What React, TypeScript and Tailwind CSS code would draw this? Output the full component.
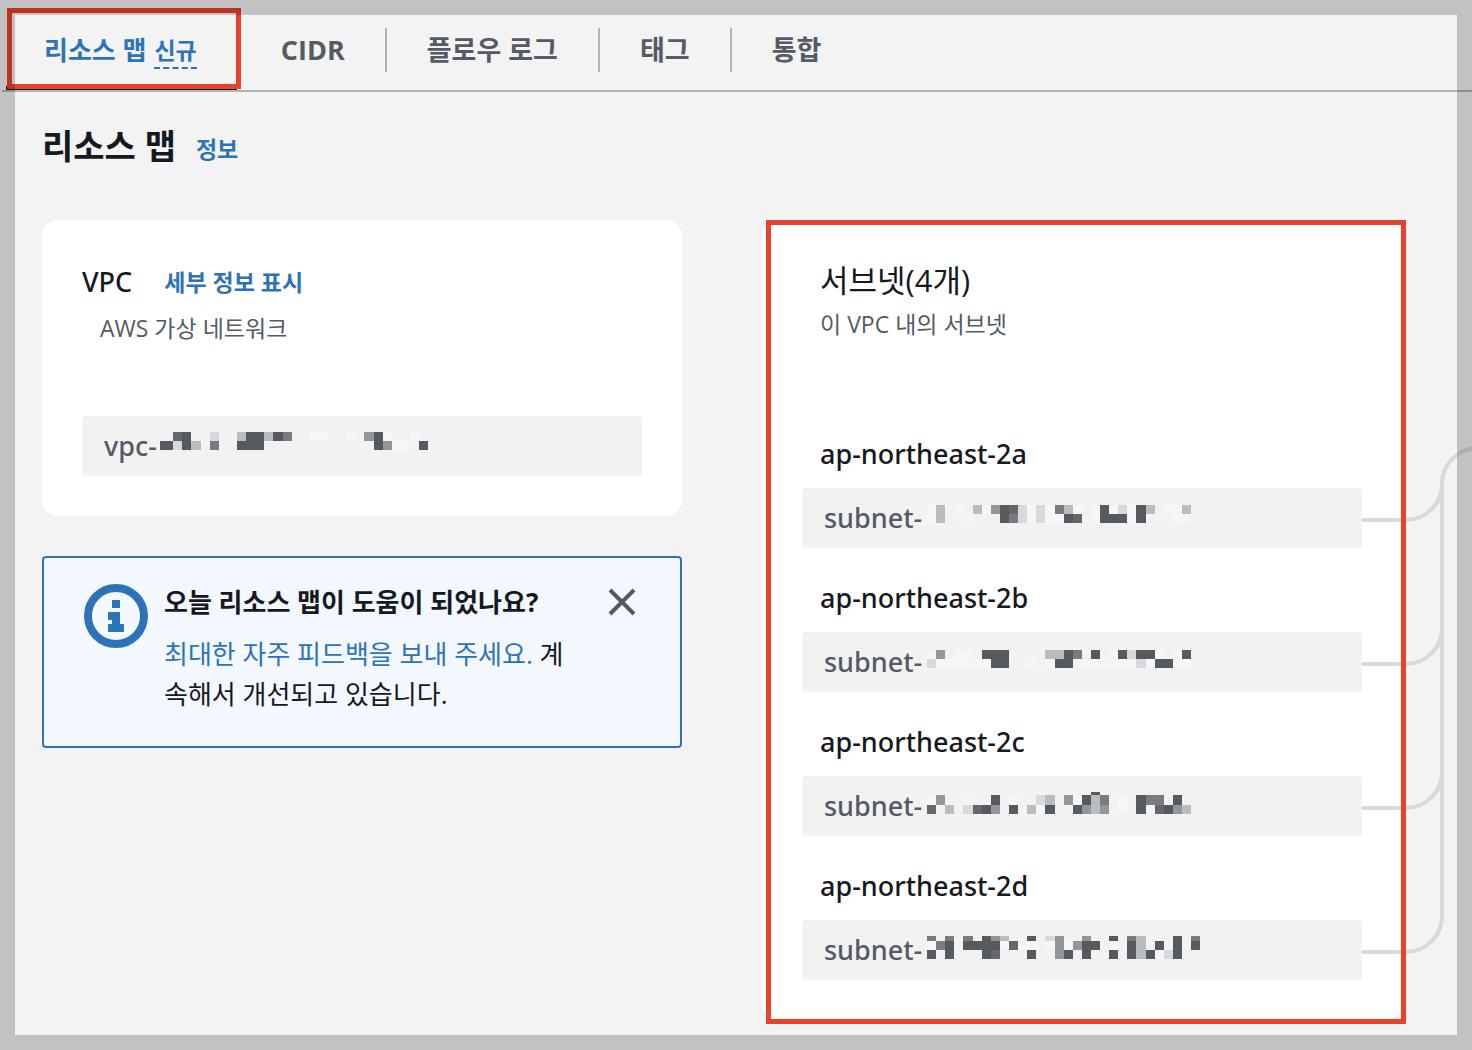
import React from "react";

type MosaicRow = [height: number, cells: string];

const SHADES: Record<string, string> = {
  w: "#f4f6f8",
  "1": "#d6dade",
  "2": "#b9bcc0",
  "3": "#92959a",
  "4": "#787c81",
  "5": "#64686d",
  "6": "#555a61",
};

/* Left edge of a mosaic column; columns are slightly wider than 9px. */
const columnX = (i: number) => Math.round((i * 255) / 28);

/* Pixelated mask drawn over the private part of a resource ID. */
function Mosaic({ rows, offset = 0, className }: { rows: MosaicRow[]; offset?: number; className: string }) {
  const total = rows.reduce((sum, [h]) => sum + h, 0);
  let top = 0;
  return (
    <svg width={275} height={total} aria-hidden="true" shapeRendering="crispEdges" className={className}>
      {rows.map(([h, cells], r) => {
        const y = top;
        top += h;
        return [...cells].map((c, i) =>
          SHADES[c] ? (
            <rect
              key={`${r}-${i}`}
              x={columnX(i) - offset}
              y={y}
              width={columnX(i + 1) - columnX(i)}
              height={h}
              fill={SHADES[c]}
            />
          ) : null
        );
      })}
    </svg>
  );
}

const VPC_ROWS: MosaicRow[] = [
  [9, "..56..1..266264..ww..w.36w..w."],
  [9, "66162.4..666............63ww.6"],
];

const SUBNETS: { zone: string; top: string; rows: MosaicRow[] }[] = [
  {
    zone: "ap-northeast-2a",
    top: "absolute left-[125px] top-[17px]",
    rows: [
      [9, "w2.w.2w3651w1w42w.w6w1w62.ww2"],
      [9, "w2..w...641w1ww65.w666w6...ww"],
    ],
  },
  {
    zone: "ap-northeast-2b",
    top: "absolute left-[125px] top-[18px]",
    rows: [
      [9, "w3.ww.666....2264.6.w6166w.w6"],
      [9, "1wwwwww66..w.w66.wwwwww1w66ww"],
    ],
  },
  {
    zone: "ap-northeast-2c",
    top: "absolute left-[125px] top-[16px]",
    rows: [
      [3, "..................6"],
      [10, "w3..w..6.w..12.3w624.w.644.6."],
      [9, "5.2.1563.6.2w6..6323.w.6w5632"],
    ],
  },
  {
    zone: "ap-northeast-2d",
    top: "absolute left-[125px] top-[16px]",
    rows: [
      [5, "4.4.4.632..6.13..3..6.42...6.4"],
      [9, "w46.6666w5ww.w3w366.w.62.6.6.6"],
      [9, "6.6...65...6..36.6..6.626w16"],
    ],
  },
];

const TABS = ["CIDR", "플로우 로그", "태그", "통합"];

function Tabs() {
  return (
    <nav className="relative ml-0.5 flex h-[92px] gap-1 border-b-2 border-[#aab7b8] pl-1 text-[27px] leading-10 font-bold text-[#545b64]">
      <button type="button" className="flex h-[90px] items-start border-b-4 border-[#16191f] pt-[30px] pr-10 pl-[38px] text-[26px] text-[#2e73b8]">
        <span>리소스 맵</span>
        <span className="mt-1 ml-2 border-b-2 border-dashed border-[#2e73b8] text-[23px] leading-[33px]">신규</span>
      </button>
      <div className="mt-7 flex h-11 divide-x-2 divide-[#aab7b8]">
        {TABS.map((tab) => (
          <button key={tab} type="button" className="px-10">
            {tab}
          </button>
        ))}
      </div>
      <div className="pointer-events-none absolute top-2 left-[5px] h-[81px] w-[234px] border-5 border-[#e8432a]" />
    </nav>
  );
}

function VpcCard() {
  return (
    <section className="h-[296px] rounded-2xl bg-white px-10 pt-[42px]">
      <div className="flex items-center gap-8">
        <h2 className="font-['Noto_Sans',sans-serif] text-[27px] leading-10 font-medium">VPC</h2>
        <a href="#details" className="text-[23px] leading-10 font-bold text-[#2e73b8]">
          세부 정보 표시
        </a>
      </div>
      <p className="mt-2 pl-[18px] text-[23px] leading-9 text-[#545b64]">AWS 가상 네트워크</p>
      <div className="relative mt-[70px] flex h-15 items-center rounded bg-[#f2f2f2] px-[22px] font-['Noto_Sans',sans-serif] text-[27px] font-medium text-[#545b64]">
        vpc-
        <Mosaic rows={VPC_ROWS} offset={5} className="absolute top-4 left-[78px]" />
      </div>
    </section>
  );
}

function FeedbackBox() {
  return (
    <section className="mt-10 flex h-48 items-start rounded border-2 border-[#2e73b8] bg-[#f2f8fe] pt-6 pr-9 pl-10">
      <svg width={64} height={64} viewBox="0 0 64 64" aria-hidden="true" className="mt-0.5 shrink-0">
        <circle cx="32" cy="32" r="28" fill="none" stroke="#2e73b8" strokeWidth="8" />
        <path d="M28 16h8v8h-8zM24 28h12v12h4v8H24v-8h4v-4h-4z" fill="#2e73b8" />
      </svg>
      <div className="ml-4 flex-1 text-[26px] leading-10">
        <h3 className="font-bold">오늘 리소스 맵이 도움이 되었나요?</h3>
        <p className="mt-3 pr-6">
          <a href="#feedback" className="text-[#2e73b8]">
            최대한 자주 피드백을 보내 주세요.
          </a>{" "}
          계속해서 개선되고 있습니다.
        </p>
      </div>
      <button type="button" aria-label="닫기" className="-mt-0.5 p-1">
        <svg width={36} height={36} viewBox="0 0 36 36" fill="none" stroke="#545b64" strokeWidth="4" aria-hidden="true">
          <path d="M6 6l24 24M30 6L6 30" />
        </svg>
      </button>
    </section>
  );
}

function Connectors() {
  return (
    <svg
      width={110}
      height={520}
      viewBox="0 0 110 520"
      fill="none"
      stroke="#d5dbdb"
      strokeWidth="4"
      aria-hidden="true"
      className="pointer-events-none absolute top-[220px] -right-[70px]"
    >
      <path d="M0 512H44A36 36 0 0 0 80 476V44A36 36 0 0 1 116 8M0 80H44A36 36 0 0 0 80 44M0 224H44A36 36 0 0 0 80 188M0 368H44A36 36 0 0 0 80 332" />
    </svg>
  );
}

function SubnetCard() {
  return (
    <section className="relative h-[800px] rounded-2xl bg-white px-10 pt-10">
      <div className="pl-[18px]">
        <h2 className="text-[31px] leading-10">서브넷(4개)</h2>
        <p className="mt-1.5 text-[23px] leading-9 text-[#545b64]">이 VPC 내의 서브넷</p>
      </div>
      <ul className="mt-[62px]">
        {SUBNETS.map((s) => (
          <li key={s.zone} className="h-36 pt-8 font-['Noto_Sans',sans-serif] text-[27px] font-medium">
            <h3 className="pl-[18px] leading-9">{s.zone}</h3>
            <div className="relative mt-4 flex h-15 items-center rounded bg-[#f2f2f2] px-[22px] text-[#545b64]">
              subnet-
              <Mosaic rows={s.rows} className={s.top} />
            </div>
          </li>
        ))}
      </ul>
      <Connectors />
      <div className="pointer-events-none absolute top-0 -right-1 -bottom-1 left-1 border-5 border-[#e8432a]" />
    </section>
  );
}

export default function App() {
  return (
    <div className="relative min-h-screen overflow-hidden bg-[#f3f3f3] font-['Open_Sans','Noto_Sans_CJK_KR',sans-serif] text-[#16191f]">
      <Tabs />
      <main className="pr-[70px] pl-[42px]">
        <header className="flex h-32 items-start gap-5 pt-7">
          <h1 className="text-[34px] leading-[52px] font-bold">리소스 맵</h1>
          <a href="#info" className="mt-1 text-[23px] leading-[50px] font-bold text-[#2e73b8]">
            정보
          </a>
        </header>
        <div className="grid grid-cols-2 items-start gap-20">
          <div>
            <VpcCard />
            <FeedbackBox />
          </div>
          <SubnetCard />
        </div>
      </main>
      <div className="pointer-events-none absolute inset-0 border-15 border-black/20" />
    </div>
  );
}
